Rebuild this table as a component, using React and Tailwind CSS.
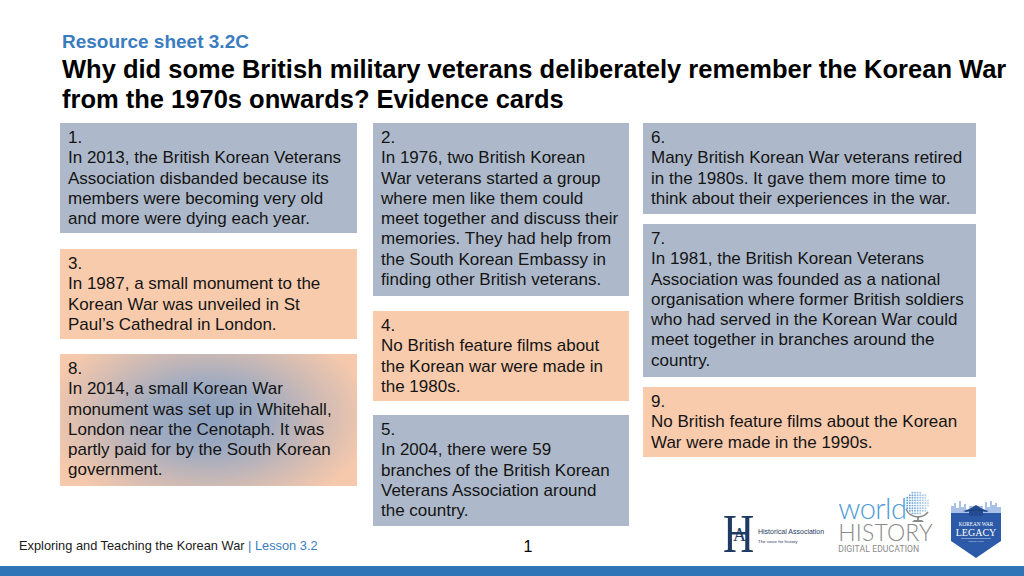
import React from "react";

const BLUE = "bg-[#adb9ca]";
const PEACH = "bg-[#f8cbad]";

function Card({ n, lines, className }) {
  return (
    <div className={`pl-[8px] pr-[4px] pt-[5px] text-[17px] leading-[20.3px] text-[#141414] ${className}`}>
      <div>{n}.</div>
      {lines.map((l, i) => (
        <div key={i} className="whitespace-nowrap">{l}</div>
      ))}
    </div>
  );
}

function Globe() {
  const dots = [];
  for (let y = 0; y < 30; y += 2.6) {
    for (let x = 0; x < 30; x += 2.6) {
      const dx = x - 15, dy = y - 13;
      if (dx * dx + dy * dy < 140) {
        const op = 0.35 + 0.6 * Math.max(0, Math.min(1, (-dx + 12) / 24));
        dots.push(<circle key={x + "-" + y} cx={x} cy={y} r="0.95" fill="#4a8fd0" opacity={op} />);
      }
    }
  }
  return (
    <svg width="30" height="34" viewBox="0 0 30 34">
      {dots}
      <path d="M4 19 A13 13 0 0 0 26 22" fill="none" stroke="#8a8a8a" strokeWidth="1.6" />
      <line x1="16" y1="26" x2="16" y2="30" stroke="#8a8a8a" strokeWidth="1.8" />
      <path d="M10 32 L22 32 L20 30 L12 30 Z" fill="#8a8a8a" />
    </svg>
  );
}

function KwlLogo() {
  return (
    <svg width="54" height="62" viewBox="0 0 54 62">
      <defs>
        <clipPath id="shield">
          <path d="M2 4 L52 4 L52 44 L27 61 L2 44 Z" />
        </clipPath>
      </defs>
      <g clipPath="url(#shield)">
        <rect x="0" y="0" width="54" height="62" fill="#ffffff" />
        <path
          d="M2 16 L2 9 L5 9 L5 6 L7 6 L7 11 L10 11 L10 4 L12 4 L12 10 L15 10 L15 7 L17 7 L17 12 L20 12 L20 9 L34 9 L34 12 L36 12 L36 5 L38 5 L38 10 L41 10 L41 3 L43 3 L43 8 L46 8 L46 6 L48 6 L48 10 L52 10 L52 18 L2 18 Z"
          fill="#a9c1e6"
        />
        <rect x="2" y="16" width="50" height="46" fill="#2d5aa8" />
        <path d="M17 14 L27 8 L37 14 L34 14 L34 19 L20 19 L20 14 Z" fill="#234c93" />
        <path d="M14 14 Q27 10 40 14 L37 15 Q27 12 17 15 Z" fill="#1f427f" />
        <text x="27" y="29" textAnchor="middle" fill="#fff" fontSize="5.2" fontFamily="'Liberation Serif', serif">KOREAN WAR</text>
        <text x="27" y="39" textAnchor="middle" fill="#fff" fontSize="10" fontFamily="'Liberation Serif', serif">LEGACY</text>
        <line x1="12" y1="41.5" x2="42" y2="41.5" stroke="#fff" strokeWidth="0.4" />
        <text x="27" y="44.6" textAnchor="middle" fill="#fff" fontSize="2.4" fontFamily="'Liberation Serif', serif">FOUNDATION</text>
      </g>
    </svg>
  );
}

export default function App() {
  return (
    <div className="w-[1024px] h-[576px] bg-white flex flex-col overflow-hidden font-['Liberation_Sans',Arial,sans-serif] text-black">
      {/* Header */}
      <div className="pl-[62px] pt-[30px]">
        <div className="text-[19px] leading-[24px] font-bold text-[#3a7cc0]">Resource sheet 3.2C</div>
        <div className="text-[25.5px] leading-[30px] font-bold">
          <div className="whitespace-nowrap">Why did some British military veterans deliberately remember the Korean War</div>
          <div className="whitespace-nowrap">from the 1970s onwards? Evidence cards</div>
        </div>
      </div>

      {/* Cards */}
      <div className="flex items-start pl-[60px] mt-[9px] h-[367px]">
        <div className="w-[297px] flex flex-col">
          <Card
            n="1"
            className={`${BLUE} h-[110px]`}
            lines={[
              "In 2013, the British Korean Veterans",
              "Association disbanded because its",
              "members were becoming very old",
              "and more were dying each year.",
            ]}
          />
          <Card
            n="3"
            className={`${PEACH} h-[90px] mt-[16px]`}
            lines={["In 1987, a small monument to the", "Korean War was unveiled in St", "Paul’s Cathedral in London."]}
          />
          <Card
            n="8"
            className="h-[132px] mt-[15px] bg-[radial-gradient(ellipse_165px_100px_at_50%_48%,#8a9fbe_0%,#a0abc0_35%,#d4bcb3_72%,#f6c9ac_100%)]"
            lines={[
              "In 2014, a small Korean War",
              "monument was set up in Whitehall,",
              "London near the Cenotaph. It was",
              "partly paid for by the South Korean",
              "government.",
            ]}
          />
        </div>

        <div className="w-[256px] ml-[16px] flex flex-col">
          <Card
            n="2"
            className={`${BLUE} h-[173px]`}
            lines={[
              "In 1976, two British Korean",
              "War veterans started a group",
              "where men like them could",
              "meet together and discuss their",
              "memories. They had help from",
              "the South Korean Embassy in",
              "finding other British veterans.",
            ]}
          />
          <Card
            n="4"
            className={`${PEACH} h-[90px] mt-[15px]`}
            lines={["No British feature films about", "the Korean war were made in", "the 1980s."]}
          />
          <Card
            n="5"
            className={`${BLUE} h-[111px] mt-[14px]`}
            lines={["In 2004, there were 59", "branches of the British Korean", "Veterans Association around", "the country."]}
          />
        </div>

        <div className="w-[333px] ml-[14px] flex flex-col">
          <Card
            n="6"
            className={`${BLUE} h-[91px]`}
            lines={[
              "Many British Korean War veterans retired",
              "in the 1980s. It gave them more time to",
              "think about their experiences in the war.",
            ]}
          />
          <Card
            n="7"
            className={`${BLUE} h-[153px] mt-[10px]`}
            lines={[
              "In 1981, the British Korean Veterans",
              "Association was founded as a national",
              "organisation where former British soldiers",
              "who had served in the Korean War could",
              "meet together in branches around the",
              "country.",
            ]}
          />
          <Card
            n="9"
            className={`${PEACH} h-[70px] mt-[10px]`}
            lines={["No British feature films about the Korean", "War were made in the 1990s."]}
          />
        </div>
      </div>

      {/* Footer */}
      <div className="flex h-[76px] items-end">
        <div className="w-[518px] pl-[19px] pb-[13px] text-[12.8px] leading-[15px] whitespace-nowrap text-[#1a1a1a]">
          Exploring and Teaching the Korean War <span className="text-[#3a7cc0]">| Lesson 3.2</span>
        </div>
        <div className="w-[20px] pb-[10px] text-[16px] leading-[18px] text-center">1</div>

        <div className="ml-[184px] self-start flex items-start h-full">
          {/* Historical Association */}
          <div className="flex items-center mt-[25px]">
            <div className="relative w-[33px] h-[38px] flex items-center justify-center">
              <span className="font-['Liberation_Serif',serif] text-[54px] leading-none text-[#1f3a63] scale-x-[0.8]">H</span>
              <span className="absolute left-[10px] top-[11px] font-['Liberation_Serif',serif] text-[18px] leading-none text-[#1f3a63] px-[1px]">A</span>
            </div>
            <div className="ml-[3px] mt-[4px] flex flex-col text-[#1f3a63]">
              <span className="text-[7px] leading-[8px] whitespace-nowrap">Historical Association</span>
              <span className="text-[4.4px] leading-[6px] mt-[3px] whitespace-nowrap">The voice for history</span>
            </div>
          </div>

          {/* World History */}
          <div className="ml-[14px] relative w-[97px] h-[68px]">
            <div className="absolute left-[64px] top-[0px]">
              <Globe />
            </div>
            <div className="flex flex-col font-['Lato',sans-serif] font-light">
              <span className="text-[29px] leading-[28px] text-[#4d9cd6] mt-[4px] tracking-[-0.5px]">world</span>
              <span className="text-[23px] leading-[20px] text-[#8a8a8a] tracking-[0.2px]">HISTORY</span>
              <span className="text-[8.6px] leading-[10px] text-[#8a8a8a] font-['Roboto',sans-serif] font-normal mt-[2px] tracking-[0.1px] whitespace-nowrap">DIGITAL EDUCATION</span>
            </div>
          </div>

          {/* KWL */}
          <div className="ml-[14px] mt-[7px]">
            <KwlLogo />
          </div>
        </div>
      </div>
      <div className="h-[10px] bg-[#2e74b6]" />
    </div>
  );
}
